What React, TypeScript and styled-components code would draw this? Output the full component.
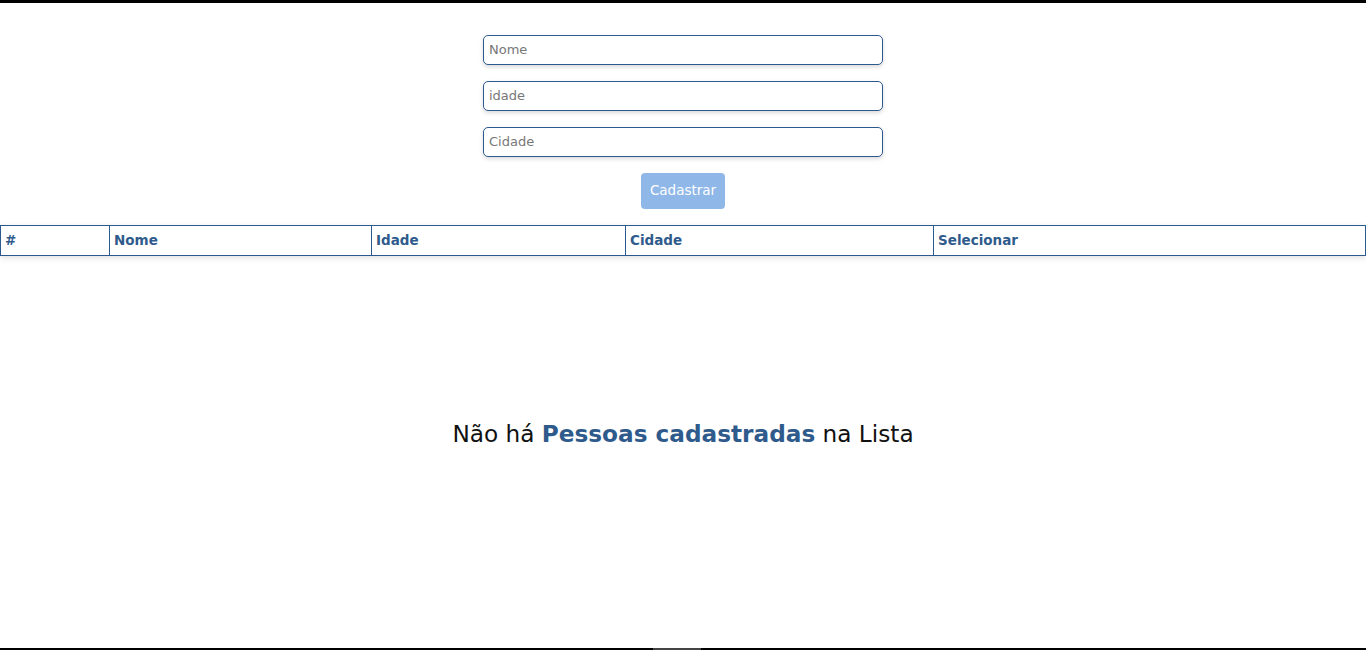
import React from "react";
import styled, { createGlobalStyle } from "styled-components";

const Global = createGlobalStyle`
  html, body { margin: 0; padding: 0; background: #fff; }
  body { font-family: "DejaVu Sans", "Noto Sans", sans-serif; overflow: hidden; }
  * { box-sizing: border-box; }
`;

const Page = styled.div`
  height: 650px;
  border-top: 3px solid #000;
  border-bottom: 2px solid #000;
  display: flex;
  flex-direction: column;
  position: relative;
`;

const Form = styled.form`
  display: flex;
  flex-direction: column;
  align-items: center;
  gap: 16px;
  padding-top: 32px;
`;

const Input = styled.input`
  width: 400px;
  height: 30px;
  border: 1px solid #2c5a8f;
  border-radius: 5px;
  padding: 0 5px 2px;
  font-family: inherit;
  font-size: 13px;
  color: #333;
  box-shadow: 0 2px 4px rgba(0, 0, 0, 0.15);
  outline: none;
  &::placeholder { color: #777; }
`;

const Button = styled.button`
  width: 84px;
  height: 36px;
  border: none;
  border-radius: 4px;
  background: #8fb8e8;
  color: #fff;
  font-family: inherit;
  font-size: 13.5px;
  padding: 0 0 2px;
`;

const Table = styled.table`
  margin-top: 16px;
  width: 100%;
  border-collapse: collapse;
  box-shadow: 0 2px 6px rgba(0, 0, 0, 0.12);
`;

const Th = styled.th`
  border: 1px solid #2c5a8f;
  height: 30px;
  padding: 0 4px 2px;
  text-align: left;
  color: #2f5b8c;
  font-size: 13.5px;
  font-weight: 700;
`;

const Empty = styled.div`
  flex: 1;
  display: flex;
  align-items: center;
  justify-content: center;
  padding-bottom: 38px;
`;

const Message = styled.p`
  margin: 0;
  font-size: 23.2px;
  color: #111;
  strong { color: #2f5b8c; font-weight: 700; }
`;

const Thumb = styled.div`
  position: absolute;
  bottom: -2px;
  left: 653px;
  width: 48px;
  height: 2px;
  background: #444;
`;

export default function App() {
  return (
    <>
      <Global />
      <Page>
        <Form onSubmit={(e) => e.preventDefault()}>
          <Input placeholder="Nome" />
          <Input placeholder="idade" />
          <Input placeholder="Cidade" />
          <Button type="submit">Cadastrar</Button>
        </Form>
        <Table>
          <thead>
            <tr>
              <Th style={{ width: 109 }}>#</Th>
              <Th style={{ width: 262 }}>Nome</Th>
              <Th style={{ width: 254 }}>Idade</Th>
              <Th style={{ width: 308 }}>Cidade</Th>
              <Th>Selecionar</Th>
            </tr>
          </thead>
        </Table>
        <Empty>
          <Message>
            Não há <strong>Pessoas cadastradas</strong> na Lista
          </Message>
        </Empty>
        <Thumb />
      </Page>
    </>
  );
}
